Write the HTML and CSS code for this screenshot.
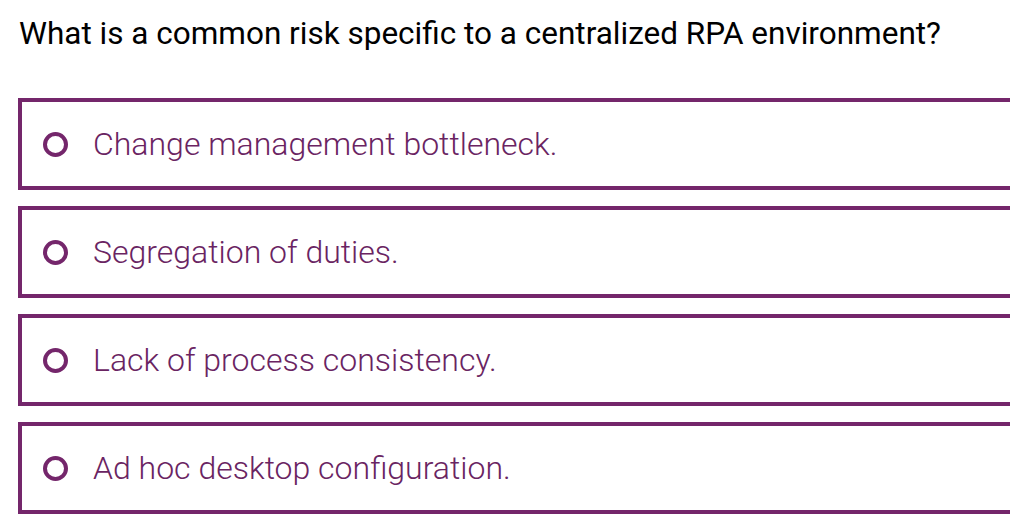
FILE: index.html
```html
<!DOCTYPE html>
<html>
<head>
<meta charset="utf-8">
<link rel="stylesheet" href="styles.css">
</head>
<body>
<div class="quiz">
  <h1 class="question">What is a common risk specific to a centralized RPA environment?</h1>
  <div class="options">
    <label class="option"><span class="radio"></span><span class="text">Change management bottleneck.</span></label>
    <label class="option"><span class="radio"></span><span class="text">Segregation of duties.</span></label>
    <label class="option"><span class="radio"></span><span class="text">Lack of process consistency.</span></label>
    <label class="option"><span class="radio"></span><span class="text">Ad hoc desktop configuration.</span></label>
  </div>
</div>
</body>
</html>
```

FILE: styles.css
```css
html, body {
  margin: 0;
  padding: 0;
  background: #ffffff;
}
.quiz {
  padding: 0 0 0 18px;
  width: 1010px;
  box-sizing: border-box;
  overflow: hidden;
}
.question {
  margin: 0;
  padding: 12px 0 0 1px;
  height: 98px;
  box-sizing: border-box;
  font-family: Roboto, "Liberation Sans", sans-serif;
  font-weight: 400;
  font-size: 31.5px;
  line-height: 44px;
  color: #000000;
  white-space: nowrap;
}
.options {
  display: flex;
  flex-direction: column;
  gap: 16px;
}
.option {
  display: flex;
  align-items: center;
  height: 92px;
  width: 1010px;
  box-sizing: border-box;
  border: 4px solid #74266b;
  border-right: none;
  padding-left: 21px;
}
.radio {
  width: 25px;
  height: 25px;
  box-sizing: border-box;
  border: 4.5px solid #74266b;
  border-radius: 50%;
  flex: none;
}
.text {
  margin-left: 25px;
  font-family: Roboto, "Liberation Sans", sans-serif;
  font-weight: 300;
  font-size: 32px;
  color: #6a2462;
}
```
